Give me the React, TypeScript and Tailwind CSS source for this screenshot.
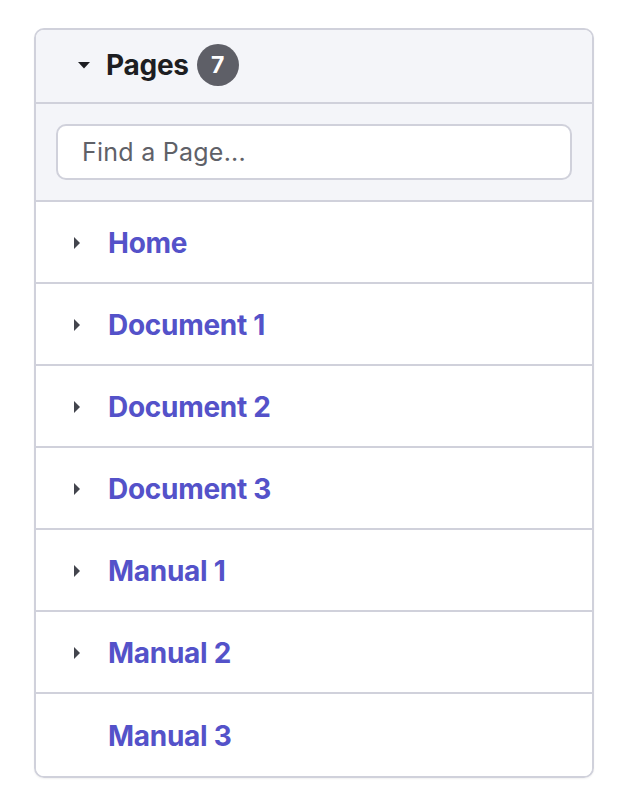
const pages = [
  { name: 'Home', children: true },
  { name: 'Document 1', children: true },
  { name: 'Document 2', children: true },
  { name: 'Document 3', children: true },
  { name: 'Manual 1', children: true },
  { name: 'Manual 2', children: true },
  { name: 'Manual 3', children: false },
];

function CaretDown() {
  return (
    <svg width="14" height="8" viewBox="0 0 14 8" className="text-[#1d1e22]">
      <path d="M1 1h12L7 7.5z" fill="currentColor" />
    </svg>
  );
}

function CaretRight() {
  return (
    <svg width="8" height="14" viewBox="0 0 8 14" className="text-[#43454d]">
      <path d="M1 1v12l6-6z" fill="currentColor" />
    </svg>
  );
}

export default function App() {
  return (
    <div className="min-h-screen bg-white px-[34px] pt-[28px] font-['Inter',sans-serif]">
      <div className="w-[560px] overflow-hidden rounded-[10px] border-2 border-[#d0d1db] shadow-[0_1px_2px_rgba(0,0,0,0.06)]">
        {/* Header */}
        <div className="flex h-[72px] items-center gap-[15px] bg-[#f4f5f9] pb-[2px] pl-[41px]">
          <CaretDown />
          <div className="flex items-center gap-[8px]">
            <span className="text-[28px] font-bold tracking-[-0.01em] text-[#1d1e22]">Pages</span>
            <span className="flex h-[42px] w-[42px] items-center justify-center rounded-full bg-[#5e5f67] text-[23px] font-bold text-white">
              7
            </span>
          </div>
        </div>

        {/* Search */}
        <div className="border-y-2 border-[#d0d1db] bg-[#f4f5f9] px-[20px] py-[20px]">
          <input
            type="text"
            placeholder="Find a Page..."
            className="h-[56px] w-full rounded-[10px] border-2 border-[#d0d1db] bg-white px-[24px] text-[25px] tracking-[0.01em] text-[#1d1e22] outline-none placeholder:text-[#5f6168]"
          />
        </div>

        {/* Rows */}
        <ul>
          {pages.map((p, i) => (
            <li
              key={p.name}
              className={`flex h-[82px] items-center bg-white pt-[1px] ${i < pages.length - 1 ? 'border-b-2 border-[#d0d1db]' : ''}`}
            >
              <span className="flex w-[72px] justify-end pr-[27px]">{p.children && <CaretRight />}</span>
              <a href="#" className="text-[28px] font-bold tracking-[-0.01em] text-[#5452c9]">
                {p.name}
              </a>
            </li>
          ))}
        </ul>
      </div>
    </div>
  );
}
